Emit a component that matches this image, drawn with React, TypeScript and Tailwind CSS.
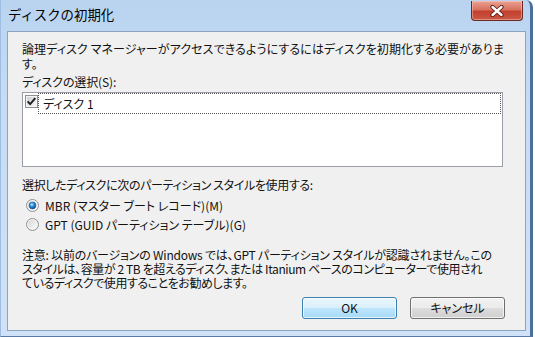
import React from "react";

const font = "font-['Noto_Sans_CJK_JP','Noto_Sans',sans-serif]";

function CheckBox() {
  return (
    <svg width="13" height="13" viewBox="0 0 13 13" className="shrink-0">
      <defs>
        <linearGradient id="cbg" x1="0" y1="0" x2="1" y2="1">
          <stop offset="0" stopColor="#cdd0d4" />
          <stop offset="1" stopColor="#f7f7f7" />
        </linearGradient>
      </defs>
      <rect x="0.5" y="0.5" width="12" height="12" fill="#f5f5f5" stroke="#8e8f8f" />
      <rect x="2" y="2" width="9" height="9" fill="url(#cbg)" />
      <path d="M2.6 6.4 L5.2 9.1 L10.3 3.2" fill="none" stroke="#1f1f1f" strokeWidth="2" />
    </svg>
  );
}

function Radio({ checked }: { checked?: boolean }) {
  return (
    <svg width="13" height="13" viewBox="0 0 13 13" className="shrink-0">
      <defs>
        <linearGradient id="rbg" x1="0" y1="0" x2="1" y2="1">
          <stop offset="0" stopColor="#d5d7da" />
          <stop offset="1" stopColor="#fbfbfb" />
        </linearGradient>
        <radialGradient id="rdot" cx="0.4" cy="0.35" r="0.7">
          <stop offset="0" stopColor="#b8ecff" />
          <stop offset="0.45" stopColor="#2f8fd8" />
          <stop offset="1" stopColor="#0a3f86" />
        </radialGradient>
      </defs>
      <circle cx="6.5" cy="6.5" r="6" fill="#f4f4f4" stroke="#8e8f8f" />
      <circle cx="6.5" cy="6.5" r="4.5" fill="url(#rbg)" />
      {checked && <circle cx="6.5" cy="6.5" r="3.4" fill="url(#rdot)" stroke="#1a4f8f" strokeWidth="0.6" />}
    </svg>
  );
}

function CloseX() {
  return (
    <svg width="16" height="12" viewBox="0 0 16 12">
      <path d="M3.5 2 L12.5 10 M12.5 2 L3.5 10" stroke="#5b1a14" strokeWidth="4.2" strokeLinecap="round" />
      <path d="M3.5 2 L12.5 10 M12.5 2 L3.5 10" stroke="#ffffff" strokeWidth="2.4" strokeLinecap="round" />
    </svg>
  );
}

export default function App() {
  return (
    <div className="w-[535px] h-[337px] bg-white overflow-hidden">
      <div
        className={`relative w-[533px] h-[337px] flex flex-col bg-[linear-gradient(180deg,#b9d3f0,#c6dcf4_30%,#cfe2f7)] border-l border-l-[#9fbde0] border-r-[3px] border-r-[#4d6f9c] border-b border-b-[#5a7aa5] rounded-tr-[7px] text-black ${font}`}
      >
        {/* title bar */}
        <div className="h-[31px] shrink-0 flex items-center pl-[7px] pb-[1px] text-[13.4px] leading-none text-[#000]">
          ディスクの初期化
        </div>
        <div className="absolute top-[1px] right-[7px] w-[52px] h-[20px] rounded-b-[4px] border border-[#6e2a22] border-t-0 bg-[linear-gradient(180deg,#e9a395,#d9725f_45%,#c4402f_55%,#c95a45)] flex items-center justify-center shadow-[inset_0_0_0_1px_rgba(255,210,200,0.45)]">
          <CloseX />
        </div>

        {/* content panel */}
        <div className="ml-[6px] w-[519px] h-[300px] border border-[#8ea3bd] bg-[#f0f0f0] flex flex-col pl-[14px] text-[12px] text-[#111] [font-feature-settings:'palt']">
          <div className="mt-[9px] leading-[15px] whitespace-nowrap">
            <div className="tracking-[0.1px]">論理ディスク マネージャーがアクセスできるようにするにはディスクを初期化する必要がありま</div>
            <div>す。</div>
          </div>
          <div className="mt-[3px] leading-[15px] whitespace-nowrap tracking-[-0.1px]">ディスクの選択(S):</div>
          <div className="mt-[3px] w-[481px] h-[75px] border border-[#9a9ea6] bg-white p-0">
            <div className="flex items-start">
              <div className="pl-[2px] pt-[2px]">
                <CheckBox />
              </div>
              <div className="w-[463px] h-[21px] border border-dotted border-[#555] flex items-center pl-[4px] leading-none">
                ディスク 1
              </div>
            </div>
          </div>
          <div className="mt-[10px] leading-[15px] whitespace-nowrap tracking-[-0.35px]">選択したディスクに次のパーティション スタイルを使用する:</div>
          <div className="mt-[4px] flex flex-col">
            <div className="h-[19px] flex items-center pl-[4px] gap-[6px] whitespace-nowrap">
              <Radio checked />
              <span>MBR (マスター ブート レコード)(M)</span>
            </div>
            <div className="h-[19px] flex items-center pl-[4px] gap-[6px] whitespace-nowrap">
              <Radio />
              <span>GPT (GUID パーティション テーブル)(G)</span>
            </div>
          </div>
          <div className="mt-[14px] leading-[14px] whitespace-nowrap">
            <div className="tracking-[-0.22px]">注意: 以前のバージョンの Windows では、GPT パーティション スタイルが認識されません。この</div>
            <div className="tracking-[-0.4px]">スタイルは、容量が 2 TB を超えるディスク、または Itanium ベースのコンピューターで使用され</div>
            <div className="tracking-[-0.45px]">ているディスクで使用することをお勧めします。</div>
          </div>
          <div className="mt-[7px] flex justify-end pr-[20px] gap-[13px]">
            <button className="w-[95px] h-[22px] rounded-[3px] border border-[#3c7fb1] bg-[linear-gradient(180deg,#eaf6fd,#d9f0fc_50%,#bee6fd_50%,#a7d9f5)] shadow-[inset_0_0_0_1px_rgba(255,255,255,0.7)] text-[12px] leading-none flex items-center justify-center">
              OK
            </button>
            <button className="w-[95px] h-[22px] rounded-[3px] border border-[#707070] bg-[linear-gradient(180deg,#f2f2f2,#ebebeb_50%,#dddddd_50%,#cfcfcf)] shadow-[inset_0_0_0_1px_rgba(255,255,255,0.7)] text-[12px] leading-none flex items-center justify-center">
              キャンセル
            </button>
          </div>
        </div>
      </div>
    </div>
  );
}
